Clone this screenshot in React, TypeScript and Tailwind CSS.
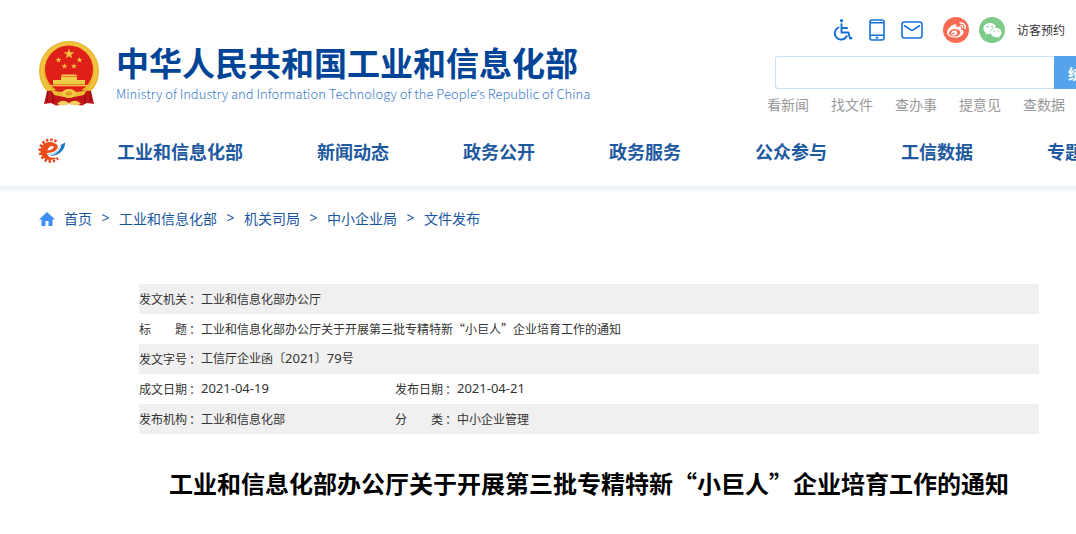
import { Fragment } from "react";
import { FaWeibo, FaWeixin } from "react-icons/fa";

const cjk = "font-['Noto_Sans_CJK_SC','Noto_Sans',sans-serif]";
const latin = "font-['Noto_Sans',sans-serif]";

const navItems = ["工业和信息化部", "新闻动态", "政务公开", "政务服务", "公众参与", "工信数据", "专题专栏"];
const quickLinks = ["看新闻", "找文件", "查办事", "提意见", "查数据"];
const crumbs = ["首页", "工业和信息化部", "机关司局", "中小企业局", "文件发布"];

function star(cx: number, cy: number, r: number) {
  return Array.from({ length: 10 }, (_, i) => {
    const a = (Math.PI / 5) * i - Math.PI / 2;
    const d = i % 2 ? r * 0.42 : r;
    return `${(cx + d * Math.cos(a)).toFixed(2)},${(cy + d * Math.sin(a)).toFixed(2)}`;
  }).join(" ");
}

function Emblem() {
  return (
    <svg viewBox="0 0 62 66" className="h-[66px] w-[62px] shrink-0" aria-hidden="true">
      <circle cx="31" cy="31" r="30" fill="#e9b52c" />
      <circle cx="31" cy="31" r="27" fill="none" stroke="#f0c440" strokeWidth="3" />
      <circle cx="31" cy="29.500" r="24" fill="#df2019" />
      <polygon points={star(31, 14, 5.4)} fill="#f3c23c" />
      <polygon points={star(20.5, 20, 3)} fill="#f3c23c" />
      <polygon points={star(41.5, 20, 3)} fill="#f3c23c" />
      <polygon points={star(26.5, 26.3, 3)} fill="#f3c23c" />
      <polygon points={star(36, 26.3, 3)} fill="#f3c23c" />
      <path d="M24 34.500h14l1.500 2h-17z M23 37h16v3H23z M15 40h32v4.500H15z" fill="#f3cc48" />
      <path d="M12 45h38v1.200H12z" fill="#f0c440" />
      <path d="M9 51 L19 50 L31 54 L43 50 L53 51 L56 64 L49 63 L44 65.500 L31 64 L18 65.500 L13 63 L6 64Z" fill="#c3161a" />
      <path d="M10 51l-1 11M15 52l0 11M47 52l0 11M52 51l1 11" stroke="#94090f" strokeWidth="1.200" />
      <path d="M12 48 Q19 53 26 51.500 L31 49 L36 51.500 Q43 53 50 48 L46 55 L36 57 L31 56.500 L26 57 L16 55Z" fill="#ebb933" />
      <ellipse cx="31" cy="53.500" rx="7" ry="4.500" fill="#f2c944" />
      <ellipse cx="31" cy="53.500" rx="3.400" ry="2" fill="#dd9c25" />
      <path d="M19 64 Q24 58 31 63 Q38 58 43 64 L38 65.500 L31 64 L24 65.500Z" fill="#f3cf60" />
    </svg>
  );
}

function GearLogo() {
  return (
    <svg viewBox="0 0 28 26" className="h-[26px] w-7" fill="none" aria-hidden="true">
      <path d="M19.500 3.500 A10.800 10.800 0 1 0 21 20.500" stroke="#e4431b" strokeWidth="2.600" strokeDasharray="2.400 1.800" />
      <path
        d="M19 6 C12 1 3 5.500 3.500 13.500 C4 21.500 14 25 21.500 19 C15 21 10.500 19.500 10 15 L14 14.500 C18.500 13.500 21.500 10.500 20.500 8 C20 6.500 19.500 6.200 19 6Z M10.300 12.500 C11 9.500 14 7.500 16.500 8.200 C17.500 10 14.500 12.200 10.300 12.500Z"
        fill="#ec4c19"
        fillRule="evenodd"
      />
      <path d="M12 17.500 C18 17.500 23 13 24.300 7.500 L22.500 7.800 L28 4.500 C28.500 11.500 21.500 19 12 17.500Z" fill="#1878c2" />
      <path d="M11 16.300 C16.500 16.500 20.500 13.500 22.500 10" stroke="#8fd0f3" strokeWidth="1" />
    </svg>
  );
}

function WheelchairIcon() {
  return (
    <svg viewBox="0 0 20 22" className="h-[22px] w-5" fill="none" stroke="#1470d6" strokeWidth="1.900" strokeLinecap="round" strokeLinejoin="round" aria-hidden="true">
      <circle cx="8.500" cy="1.700" r="1.600" fill="#1470d6" stroke="none" />
      <path d="M8.500 5v8.500h7l1.500 6 1.500-.5M8.500 9h5.500" />
      <path d="M5.500 8.500a6.300 6.300 0 1 0 8.300 8.500" />
    </svg>
  );
}

function PhoneIcon() {
  return (
    <svg viewBox="0 0 16 22" className="h-[22px] w-4" fill="none" stroke="#1470d6" strokeWidth="1.600" aria-hidden="true">
      <rect x="1" y="1" width="14" height="20" rx="2" />
      <path d="M1 3.700h14M1 16.200h14" />
      <path d="M6.700 18.700h2.600" strokeWidth="1.800" />
    </svg>
  );
}

function MailIcon() {
  return (
    <svg viewBox="0 0 22 18" className="h-[18px] w-[22px]" fill="none" stroke="#1470d6" strokeWidth="1.600" strokeLinejoin="round" aria-hidden="true">
      <rect x="1" y="1" width="20" height="16" rx="2.500" />
      <path d="M3 4.500l8 5.200 8-5.200" />
    </svg>
  );
}

function Brand() {
  return (
    <a href="#" className="flex items-start gap-4">
      <Emblem />
      <span className="block pt-0.5">
        <span className="block text-[33px] leading-10 font-bold text-[#004498]">中华人民共和国工业和信息化部</span>
        <span lang="en" className="mt-[3px] block text-[13px] leading-[18px] font-light text-[#3a7bcb]">
          Ministry of Industry and Information Technology of the People<span className={latin}>’</span>s Republic of China
        </span>
      </span>
    </a>
  );
}

function Tools() {
  return (
    <div className="flex w-[371px] shrink-0 flex-col pt-4">
      <div className="flex h-7 items-center pl-[66px]">
        <a href="#" aria-label="无障碍"><WheelchairIcon /></a>
        <a href="#" aria-label="手机版" className="ml-4"><PhoneIcon /></a>
        <a href="#" aria-label="邮箱" className="ml-4"><MailIcon /></a>
        <a href="#" aria-label="微博" className="ml-5 flex size-[26px] items-center justify-center rounded-full bg-[#f96a52] text-white">
          <FaWeibo size={19} />
        </a>
        <a href="#" aria-label="微信" className="ml-[10px] flex size-[26px] items-center justify-center rounded-full bg-[#7dcb89] text-white">
          <FaWeixin size={19} />
        </a>
        <a href="#" className="ml-3 text-xs text-[#333]">访客预约</a>
      </div>
      <form className="mt-3 ml-2 flex h-[33px]" onSubmit={(e) => e.preventDefault()}>
        <input
          type="text"
          aria-label="搜索"
          className="min-w-0 flex-1 rounded-l-[3px] border border-r-0 border-[#cfe0ee] bg-white px-2 text-sm outline-none"
        />
        <button type="submit" className="w-[84px] bg-[#55a3ea] text-sm font-bold whitespace-nowrap text-white">统一搜索</button>
      </form>
      <div className="mt-1 flex gap-[22px] text-sm leading-[22px] text-[#999]">
        {quickLinks.map((t) => (
          <a key={t} href="#" className="shrink-0">{t}</a>
        ))}
      </div>
    </div>
  );
}

function Label({ children }: { children: string }) {
  return (
    <th scope="row" className="p-0 text-left font-normal whitespace-nowrap">
      {children}
      <span className="ml-0.5">：</span>
    </th>
  );
}

function Info() {
  return (
    <table className="mx-auto mt-[54px] w-[900px] table-fixed border-collapse text-xs text-[#333]">
      <colgroup>
        <col className="w-[62px]" />
        <col className="w-[194px]" />
        <col className="w-[62px]" />
        <col />
      </colgroup>
      <tbody>
        <tr className="h-[30px] bg-[#f0f0f0]">
          <Label>发文机关</Label>
          <td className="p-0" colSpan={3}>工业和信息化部办公厅</td>
        </tr>
        <tr className="h-[30px]">
          <Label>标　　题</Label>
          <td className="p-0" colSpan={3}>工业和信息化部办公厅关于开展第三批专精特新“小巨人”企业培育工作的通知</td>
        </tr>
        <tr className="h-[30px] bg-[#f0f0f0]">
          <Label>发文字号</Label>
          <td className="p-0" colSpan={3}>
            工信厅企业函〔<span className={`${latin} text-[13px]`}>2021</span>〕<span className={`${latin} text-[13px]`}>79</span>号
          </td>
        </tr>
        <tr className="h-[30px]">
          <Label>成文日期</Label>
          <td className={`p-0 text-[13px] ${latin}`}>2021-04-19</td>
          <Label>发布日期</Label>
          <td className={`p-0 text-[13px] ${latin}`}>2021-04-21</td>
        </tr>
        <tr className="h-[30px] bg-[#f0f0f0]">
          <Label>发布机构</Label>
          <td className="p-0">工业和信息化部</td>
          <Label>分　　类</Label>
          <td className="p-0">中小企业管理</td>
        </tr>
      </tbody>
    </table>
  );
}

export default function App() {
  return (
    <div lang="zh-CN" className={`overflow-x-hidden bg-white ${cjk}`}>
      <div className="min-w-[1178px]">
        <header>
          <div className="flex h-[120px] items-start justify-between pr-10 pl-[38px]">
            <div className="pt-10"><Brand /></div>
            <Tools />
          </div>
          <nav className="flex h-[66px] items-center pb-1 pl-[37px]">
            <a href="#" aria-label="首页"><GearLogo /></a>
            <div className="ml-[52px] flex gap-[74px] text-lg font-bold text-[#2059a0]">
              {navItems.map((t) => (
                <a key={t} href="#" className="shrink-0">{t}</a>
              ))}
            </div>
          </nav>
          <div className="h-2 bg-linear-to-b from-[#e6eef5] to-white" />
        </header>
        <main>
          <nav aria-label="面包屑" className="mt-[11px] flex h-[25px] items-center pl-[39px] text-sm text-[#1a56a0]">
            <svg viewBox="0 0 16 14" className="mt-0.5 mr-[9px] h-[14px] w-4" fill="#3d8ff5" aria-hidden="true">
              <path d="M8 0L0 7.500h2.500V14h4V9h3v5h4V7.500H16z" />
            </svg>
            {crumbs.map((t, i) => (
              <Fragment key={t}>
                {i > 0 && <span className={`w-[27px] text-center ${latin}`}>&gt;</span>}
                <a href="#">{t}</a>
              </Fragment>
            ))}
          </nav>
          <Info />
          <h1 className="mt-[31px] pb-8 text-center text-2xl leading-9 font-bold text-black">
            工业和信息化部办公厅关于开展第三批专精特新“小巨人”企业培育工作的通知
          </h1>
        </main>
      </div>
    </div>
  );
}
